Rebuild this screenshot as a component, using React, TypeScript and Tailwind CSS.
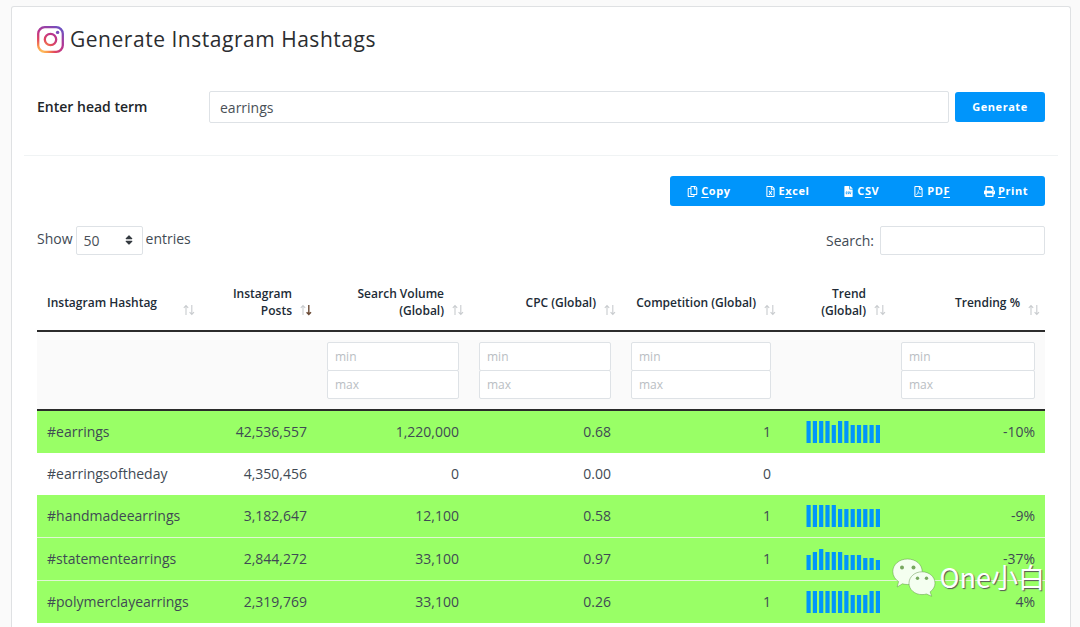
import React from "react";
import {
  FaFileCsv,
  FaPrint,
  FaRegCopy,
  FaRegFileExcel,
  FaRegFilePdf,
  FaSort,
} from "react-icons/fa";

type Row = {
  tag: string;
  posts: string;
  volume: string;
  cpc: string;
  competition: string;
  trend: number[];
  trending: string;
  highlighted: boolean;
};

const rows: Row[] = [
  { tag: "#earrings", posts: "42,536,557", volume: "1,220,000", cpc: "0.68", competition: "1", trend: [22, 22, 22, 22, 18, 22, 22, 18, 18, 18, 18, 18], trending: "-10%", highlighted: true },
  { tag: "#earringsoftheday", posts: "4,350,456", volume: "0", cpc: "0.00", competition: "0", trend: [], trending: "", highlighted: false },
  { tag: "#handmadeearrings", posts: "3,182,647", volume: "12,100", cpc: "0.58", competition: "1", trend: [22, 22, 22, 22, 22, 18, 18, 18, 18, 18, 18, 18], trending: "-9%", highlighted: true },
  { tag: "#statementearrings", posts: "2,844,272", volume: "33,100", cpc: "0.97", competition: "1", trend: [15, 18, 21, 18, 18, 18, 15, 15, 15, 12, 12, 10], trending: "-37%", highlighted: true },
  { tag: "#polymerclayearrings", posts: "2,319,769", volume: "33,100", cpc: "0.26", competition: "1", trend: [22, 22, 22, 22, 22, 22, 22, 18, 18, 18, 22, 22], trending: "4%", highlighted: true },
];

const columns = [
  { label: "Instagram Hashtag", width: "w-[163px]", align: "text-left", filter: false },
  { label: "Instagram Posts", width: "w-[117px]", align: "text-right", filter: false, sorted: true },
  { label: "Search Volume (Global)", width: "w-[152px]", align: "text-right", filter: true },
  { label: "CPC (Global)", width: "w-[152px]", align: "text-right", filter: true },
  { label: "Competition (Global)", width: "w-[160px]", align: "text-right", filter: true },
  { label: "Trend (Global)", width: "w-[110px]", align: "text-right", filter: false },
  { label: "Trending %", width: "w-[154px]", align: "text-right", filter: true },
];

const exportActions = [
  { icon: FaRegCopy, before: "", key: "C", after: "opy" },
  { icon: FaRegFileExcel, before: "E", key: "x", after: "cel" },
  { icon: FaFileCsv, before: "C", key: "S", after: "V" },
  { icon: FaRegFilePdf, before: "PD", key: "F", after: "" },
  { icon: FaPrint, before: "", key: "P", after: "rint" },
];

function InstagramLogo() {
  return (
    <svg width="27" height="27" viewBox="0 0 27 27" fill="none" aria-hidden="true">
      <defs>
        <radialGradient id="ig-warm" gradientUnits="userSpaceOnUse" cx="4" cy="27" r="31">
          <stop offset="0" stopColor="#ffc860" />
          <stop offset="0.22" stopColor="#fb964a" />
          <stop offset="0.45" stopColor="#e0455f" />
          <stop offset="0.72" stopColor="#b83490" />
          <stop offset="1" stopColor="#6f50c0" />
        </radialGradient>
      </defs>
      <rect x="1.2" y="1.2" width="24.6" height="24.6" rx="6.6" stroke="url(#ig-warm)" strokeWidth="2.3" />
      <circle cx="13.5" cy="13.5" r="5.7" stroke="url(#ig-warm)" strokeWidth="2.3" />
      <circle cx="20.6" cy="6.4" r="1.7" fill="#7a4cba" />
    </svg>
  );
}

function SortArrows({ sorted }: { sorted?: boolean }) {
  return (
    <svg width="12" height="12" viewBox="0 0 12 12" fill="none" strokeWidth="1.1" aria-hidden="true">
      <path d="M3 11V1.5M0.8 3.8L3 1.5L5.2 3.8" stroke="#c9cccf" />
      <path d="M8.8 1V10.5M6.6 8.2L8.8 10.5L11 8.2" stroke={sorted ? "#6b4a35" : "#c9cccf"} strokeWidth={sorted ? 1.4 : 1.1} />
    </svg>
  );
}

function TrendBars({ values }: { values: number[] }) {
  return (
    <svg className="ml-auto block" width="75" height="22" viewBox="0 0 75 22" aria-hidden="true">
      {values.map((value, i) => (
        <rect key={i} x={0.5 + i * 6.3} y={22 - value} width="4.2" height={value} fill="#0095fb" />
      ))}
    </svg>
  );
}

function WeChatLogo() {
  return (
    <svg width="44" height="39" viewBox="0 0 44 39" aria-hidden="true">
      <g stroke="#5c8f45" strokeOpacity="0.6" strokeWidth="0.8" fill="#f4fff0">
        <path d="M15.5 1C7.3 1 .8 6.500 .8 13.500c0 4.200 2.300 7.800 5.800 10.100L5.200 29l5.200-3.200c1.700.5 3.400.7 5.100.7 8.200 0 14.700-5.700 14.700-12.900S23.700 1 15.500 1z" />
        <path d="M30 13.800c-7.200 0-13 5-13 11.400s5.800 11.400 13 11.400c1.600 0 3.100-.2 4.500-.6l5.200 2.300-1.600-4.400c3-2.100 4.900-5.200 4.900-8.700 0-6.400-5.800-11.400-13-11.400z" />
      </g>
      <g fill="#78a860">
        <circle cx="10" cy="9.500" r="2" />
        <circle cx="21.500" cy="9.500" r="2" />
        <circle cx="25.500" cy="20.200" r="1.700" />
        <circle cx="34.500" cy="20.200" r="1.700" />
      </g>
    </svg>
  );
}

export default function App() {
  return (
    <div className="flex min-h-screen flex-col bg-[#fafafa] pt-1.5 pr-[9px] pl-[11px] font-['Open_Sans','Noto_Sans_CJK_SC',sans-serif] text-sm text-[#3f4a54]">
      <main className="flex-1 rounded-t-[3px] border border-b-0 border-[#dfe1e3] bg-white px-3">
        <header className="flex h-16 items-center gap-1.5 px-[13px]">
          <InstagramLogo />
          <h1 className="text-[21px] tracking-wide text-[#2b2d30]">Generate Instagram Hashtags</h1>
        </header>

        <form className="flex items-center px-[13px] pt-5 pb-8" onSubmit={(e) => e.preventDefault()}>
          <label htmlFor="head-term" className="w-[172px] shrink-0 font-semibold text-[#212529]">
            Enter head term
          </label>
          <input
            id="head-term"
            defaultValue="earrings"
            className="h-8 min-w-0 flex-1 rounded-[2px] border border-[#dee2e6] px-2.5 text-[#495057] outline-none"
          />
          <button type="submit" className="ml-1.5 h-[30px] w-[90px] rounded-[3px] bg-[#0095fb] text-[11px] font-bold tracking-wider text-white">
            Generate
          </button>
        </form>

        <hr className="border-[#f0f3f4]" />

        <section className="px-[13px] pt-5">
          <div className="flex justify-end">
            <div className="flex h-[30px] rounded-[3px] bg-[#0095fb] text-[11px] font-bold tracking-wider text-white">
              {exportActions.map(({ icon: Icon, before, key, after }) => (
                <button key={before + key + after} type="button" className="flex items-center gap-[3px] px-[17px]">
                  <Icon className="h-[11px] w-auto" aria-hidden="true" />
                  <span>
                    {before}
                    <u className="underline-offset-2">{key}</u>
                    {after}
                  </span>
                </button>
              ))}
            </div>
          </div>

          <div className="flex items-start justify-between pt-5">
            <label className="flex gap-[3px]">
              <span className="leading-[26px]">Show</span>
              <span className="relative block">
                <select defaultValue="50" className="h-[29px] w-[67px] appearance-none rounded-[2px] border border-[#dee2e6] bg-white px-[7px] text-[#495057] outline-none">
                  <option>10</option>
                  <option>25</option>
                  <option>50</option>
                  <option>100</option>
                </select>
                <FaSort className="pointer-events-none absolute top-2 right-2 size-3 text-[#343a40]" aria-hidden="true" />
              </span>
              <span className="leading-[26px]">entries</span>
            </label>
            <label className="flex items-center gap-1.5">
              Search:
              <input type="search" className="h-[29px] w-[165px] rounded-[2px] border border-[#dee2e6] px-2 outline-none" />
            </label>
          </div>

          <div className="relative pt-[19px]">
            <table className="w-full table-fixed border-separate border-spacing-0">
              <colgroup>
                {columns.map((c) => (
                  <col key={c.label} className={c.width} />
                ))}
              </colgroup>
              <thead className="text-[#212b36]">
                <tr className="h-[58px]">
                  {columns.map((c) => (
                    <th
                      key={c.label}
                      scope="col"
                      className={`relative border-b-2 border-[#2b2b2b] pr-[25px] pl-2.5 text-xs leading-[17px] font-semibold ${c.align}`}
                    >
                      {c.label}
                      <span className="absolute right-[5px] bottom-3.5">
                        <SortArrows sorted={c.sorted} />
                      </span>
                    </th>
                  ))}
                </tr>
                <tr className="h-[79px] bg-[#fafafa]">
                  {columns.map((c) => (
                    <td key={c.label} className="border-b-2 border-[#2b2b2b] px-2.5">
                      {c.filter && (
                        <div className="flex flex-col">
                          <input
                            placeholder="min"
                            aria-label={`${c.label} min`}
                            className="h-[29px] w-full rounded-[2px] border border-[#dee2e6] bg-white px-[7px] text-xs outline-none placeholder:text-[#b9bec3]"
                          />
                          <input
                            placeholder="max"
                            aria-label={`${c.label} max`}
                            className="-mt-px h-[29px] w-full rounded-[2px] border border-[#dee2e6] bg-white px-[7px] text-xs outline-none placeholder:text-[#b9bec3]"
                          />
                        </div>
                      )}
                    </td>
                  ))}
                </tr>
              </thead>
              <tbody>
                {rows.map((r, i) => {
                  const divided = r.highlighted && rows[i + 1]?.highlighted;
                  const cell = divided ? "h-[43px] border-b border-[#e0f7d4] px-2.5" : "h-[42px] px-2.5";
                  return (
                    <tr key={r.tag} className={r.highlighted ? "bg-[#99ff66] text-right" : "bg-white text-right"}>
                      <td className={`${cell} text-left`}>{r.tag}</td>
                      <td className={cell}>{r.posts}</td>
                      <td className={cell}>{r.volume}</td>
                      <td className={cell}>{r.cpc}</td>
                      <td className={cell}>{r.competition}</td>
                      <td className={cell}>{r.trend.length > 0 && <TrendBars values={r.trend} />}</td>
                      <td className={cell}>{r.trending}</td>
                    </tr>
                  );
                })}
              </tbody>
            </table>

            <div className="pointer-events-none absolute right-0 bottom-6.5 flex items-center gap-1 font-['Noto_Sans_CJK_SC',sans-serif] text-[27px] leading-10 font-normal whitespace-nowrap text-white [text-shadow:1px_1px_1px_#555]">
              <WeChatLogo />
              <span>One小白</span>
            </div>
          </div>
        </section>
      </main>
    </div>
  );
}
